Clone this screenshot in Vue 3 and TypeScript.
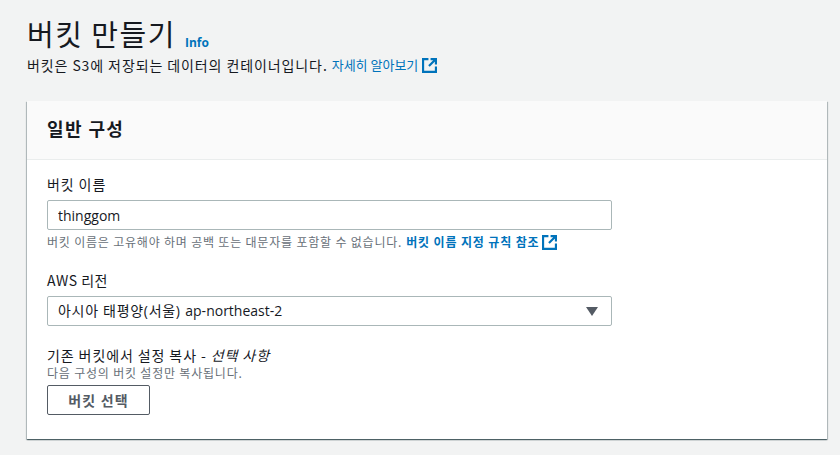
<template>
  <div class="page">
    <header class="head">
      <div class="titleRow">
        <h1 class="title">버킷 만들기</h1>
        <a class="info">Info</a>
      </div>
      <p class="desc">
        <span class="wide">버킷은 S3에 저장되는 데이터의 컨테이너입니다.</span>
        <a class="link">자세히 알아보기</a>
        <svg class="ext" viewBox="1 1 14 14" width="15" height="15">
          <path d="M7 2H2v12h12V9" />
          <path d="M9 2h5v5M14 2L7.5 8.5" />
        </svg>
      </p>
    </header>

    <section class="card">
      <h2 class="cardTitle">일반 구성</h2>
      <div class="cardBody">
        <div class="field">
          <label class="label">버킷 이름</label>
          <input class="control" :value="bucketName" readonly />
          <p class="hint">
            <span class="wide small">버킷 이름은 고유해야 하며 공백 또는 대문자를 포함할 수 없습니다.</span>
            <a class="link strong">버킷 이름 지정 규칙 참조</a>
            <svg class="ext" viewBox="1 1 14 14" width="15" height="15">
              <path d="M7 2H2v12h12V9" />
              <path d="M9 2h5v5M14 2L7.5 8.5" />
            </svg>
          </p>
        </div>

        <div class="field">
          <label class="label region">AWS 리전</label>
          <div class="control select">
            <span><span class="regionKo">{{ regionName }}</span> {{ regionCode }}</span>
            <span class="caret"></span>
          </div>
        </div>

        <div class="field last">
          <label class="label">기존 버킷에서 설정 복사 - <i>선택 사항</i></label>
          <p class="hint tight"><span class="wide small">다음 구성의 버킷 설정만 복사됩니다.</span></p>
          <button class="btn" type="button">버킷 선택</button>
        </div>
      </div>
    </section>
  </div>
</template>

<script setup lang="ts">
const bucketName = 'thinggom'
const regionName = '아시아 태평양(서울)'
const regionCode = 'ap-northeast-2'
</script>

<style>
html,
body {
  background: #f2f3f3;
}
</style>

<style scoped>
.page {
  box-sizing: border-box;
  width: 840px;
  height: 455px;
  overflow: hidden;
  padding: 15px 13px 0 27px;
  background: #f2f3f3;
  color: #16191f;
  font-family: "Noto Sans CJK KR", "Noto Sans", sans-serif;
  font-size: 14px;
}

.titleRow {
  display: flex;
  align-items: flex-end;
  gap: 9px;
  height: 36px;
}

.title {
  margin: 0;
  font-size: 29px;
  font-weight: 400;
  letter-spacing: 1.5px;
  line-height: 36px;
}

.info {
  font-family: "Open Sans", "Noto Sans", sans-serif;
  font-size: 12px;
  font-weight: 700;
  line-height: 16px;
  color: #0073bb;
}

.desc {
  display: flex;
  align-items: center;
  gap: 4px;
  margin: 4px 0 0;
  height: 20px;
  font-size: 14px;
  line-height: 20px;
}

.wide {
  letter-spacing: 0.9px;
}

.wide.small {
  letter-spacing: 0.8px;
}

.link {
  color: #0073bb;
  font-size: 13px;
}

.ext {
  flex: none;
  fill: none;
  stroke: #0073bb;
  stroke-width: 2;
}

.card {
  margin-top: 26px;
  width: 800px;
  height: 338px;
  background: #fff;
  box-shadow: 0 1px 1px 0 rgba(0, 28, 36, 0.5), 1px 1px 1px 0 rgba(0, 28, 36, 0.2), -1px 1px 1px 0 rgba(0, 28, 36, 0.2);
}

.cardTitle {
  box-sizing: border-box;
  height: 59px;
  margin: 0;
  padding: 15px 20px 0;
  background: #fafafa;
  border-bottom: 1px solid #eaeded;
  font-size: 18px;
  font-weight: 700;
  letter-spacing: 1.4px;
  line-height: 24px;
}

.cardBody {
  display: flex;
  flex-direction: column;
  padding: 14px 20px 0;
}

.field {
  display: flex;
  flex-direction: column;
  align-items: flex-start;
  margin-bottom: 20px;
}

.field.last {
  margin-top: -1px;
}

.label {
  font-size: 14px;
  letter-spacing: 0.9px;
  line-height: 20px;
  margin-bottom: 6px;
}

.label.region {
  letter-spacing: 0.5px;
}

.control {
  box-sizing: border-box;
  width: 565px;
  height: 30px;
  padding: 0 10px;
  border: 1px solid #aab7b8;
  border-radius: 2px;
  background: #fff;
  color: #16191f;
  font-family: "Open Sans", "Noto Sans CJK KR", sans-serif;
  font-size: 14px;
  line-height: 28px;
  outline: none;
}

.select {
  display: flex;
  align-items: center;
  justify-content: space-between;
}

.regionKo {
  letter-spacing: 0.7px;
  margin-right: 1px;
}

.caret {
  width: 0;
  height: 0;
  margin-right: 3px;
  border-left: 6px solid transparent;
  border-right: 6px solid transparent;
  border-top: 9px solid #545b64;
}

.hint {
  display: flex;
  align-items: center;
  gap: 4px;
  margin: 4px 0 0;
  font-size: 12px;
  line-height: 16px;
  color: #687078;
}

.hint .ext {
  margin-left: -1px;
}

.strong {
  font-size: 12px;
  font-weight: 700;
  letter-spacing: 0.85px;
}

.last .label {
  margin-bottom: 0;
}

.tight {
  margin: 0 0 4px;
}

.btn {
  box-sizing: border-box;
  width: 103px;
  height: 30px;
  padding: 0;
  border: 1px solid #545b64;
  border-radius: 2px;
  background: #fff;
  color: #545b64;
  font-family: "Noto Sans CJK KR", sans-serif;
  font-size: 14px;
  font-weight: 700;
  letter-spacing: 1.2px;
}
</style>
